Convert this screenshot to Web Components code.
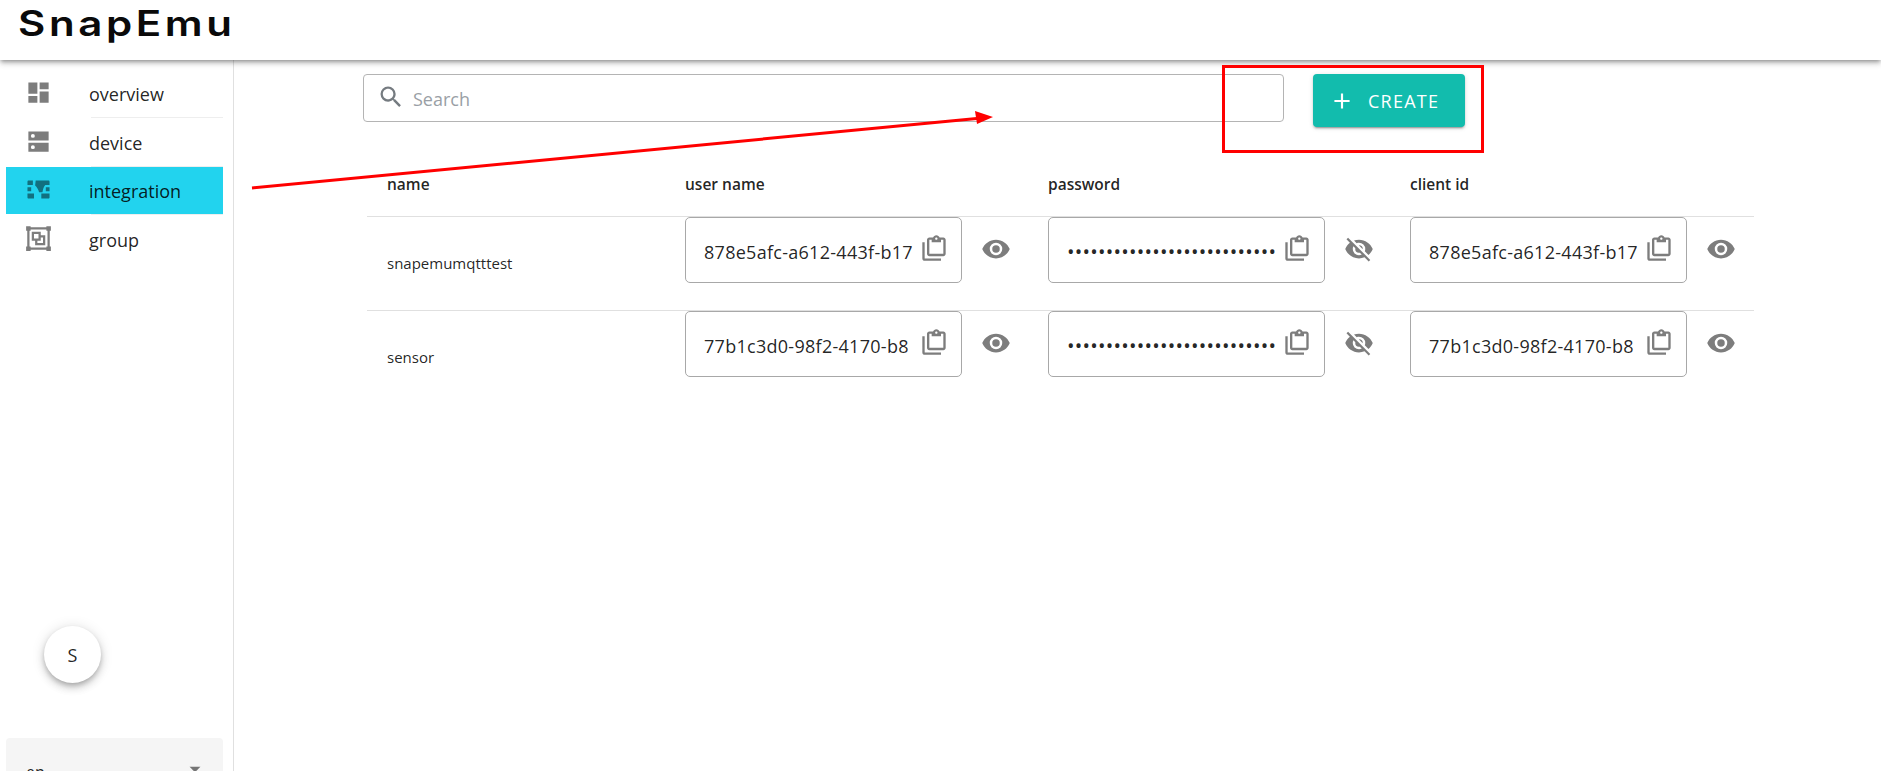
<!DOCTYPE html>
<html>
<head>
<meta charset="utf-8">
<style>
html, body { margin: 0; height: 100%; overflow: hidden; background: #fff; }
body { font-family: "Open Sans", "Noto Sans", sans-serif; color: rgba(0,0,0,.87); }
</style>
</head>
<body>
<app-shell></app-shell>

<script>
const ICONS = {
    dashboard: 'M13,3V9H21V3M13,21H21V11H13M3,21H11V15H3M3,13H11V3H3V13Z',
    device: 'M3 3h18v8H3zM3 13h18v8H3zM7 5.25a1.75 1.75 0 1 0 0 3.5a1.75 1.75 0 1 0 0-3.5zM7 15.25a1.75 1.75 0 1 0 0 3.5a1.75 1.75 0 1 0 0-3.5z',
    integration: 'M3.2 4H7V8H2.2V5C2.2 4.400 2.600 4 3.200 4zM2.200 10H5.500V13.500H2.200zM2.200 15.500H8V20H3.200C2.600 20 2.200 19.600 2.200 19zM9.500 4H20.800C21.400 4 21.800 4.400 21.800 5V8H18C16.500 9.500 16 12 15.500 14.500H12.500C12 12 10.500 10 9 8.500zM18.500 10H21.800V13.500H18.500zM14.500 15.500H21.800V19C21.800 19.600 21.400 20 20.800 20H14.500z',
    group: 'M1,1V5H2V19H1V23H5V22H19V23H23V19H22V5H23V1H19V2H5V1M5,4H19V5H20V19H19V20H5V19H4V5H5M6,6V14H9V18H18V9H14V6M8,8H12V12H8M14,11H16V16H11V14H14',
    magnify: 'M9.5,3A6.5,6.5 0 0,1 16,9.5C16,11.11 15.41,12.59 14.44,13.73L14.71,14H15.5L20.5,19L19,20.5L14,15.5V14.71L13.73,14.44C12.59,15.41 11.11,16 9.5,16A6.5,6.5 0 0,1 3,9.5A6.5,6.5 0 0,1 9.5,3M9.5,5C7,5 5,7 5,9.5C5,12 7,14 9.5,14C12,14 14,12 14,9.5C14,7 12,5 9.5,5Z',
    plus: 'M19,13H13V19H11V13H5V11H11V5H13V11H19V13Z',
    clipboard: 'M4 7V21H18V23H4C2.9 23 2 22.1 2 21V7H4M20 3C21.1 3 22 3.9 22 5V17C22 18.1 21.1 19 20 19H8C6.9 19 6 18.1 6 17V5C6 3.9 6.9 3 8 3H11.18C11.6 1.84 12.7 1 14 1C15.3 1 16.4 1.84 16.82 3H20M14 3C13.45 3 13 3.45 13 4C13 4.55 13.45 5 14 5C14.55 5 15 4.55 15 4C15 3.45 14.55 3 14 3M10 7V5H8V17H20V5H18V7H10Z',
    eye: 'M12,9A3,3 0 0,0 9,12A3,3 0 0,0 12,15A3,3 0 0,0 15,12A3,3 0 0,0 12,9M12,17A5,5 0 0,1 7,12A5,5 0 0,1 12,7A5,5 0 0,1 17,12A5,5 0 0,1 12,17M12,4.5C7,4.5 2.73,7.61 1,12C2.73,16.39 7,19.5 12,19.5C17,19.5 21.27,16.39 23,12C21.27,7.61 17,4.5 12,4.5Z',
    eyeoff: 'M11.83,9L15,12.16C15,12.11 15,12.05 15,12A3,3 0 0,0 12,9C11.94,9 11.89,9 11.83,9M7.53,9.8L9.08,11.35C9.03,11.56 9,11.77 9,12A3,3 0 0,0 12,15C12.22,15 12.44,14.97 12.65,14.92L14.2,16.47C13.53,16.8 12.79,17 12,17A5,5 0 0,1 7,12C7,11.21 7.2,10.47 7.53,9.8M2,4.27L4.28,6.55L4.73,7C3.08,8.3 1.78,10 1,12C2.73,16.39 7,19.5 12,19.5C13.55,19.5 15.03,19.2 16.38,18.66L16.81,19.08L19.73,22L21,20.73L3.27,3M12,7A5,5 0 0,1 17,12C17,12.64 16.87,13.26 16.64,13.82L19.57,16.75C21.07,15.5 22.27,13.86 23,12C21.27,7.61 17,4.5 12,4.5C10.6,4.5 9.26,4.75 8,5.2L10.17,7.35C10.74,7.13 11.35,7 12,7Z',
    menudown: 'M7,10L12,15L17,10H7Z'
};

class MdiIcon extends HTMLElement {
    connectedCallback(){
        const size = this.getAttribute('size') || 24;
        this.attachShadow({mode: 'open'}).innerHTML = `
        <style>
        :host { display: inline-flex; flex: none; width: ${size}px; height: ${size}px; color: inherit; }
        svg { width: 100%; height: 100%; display: block; fill: currentColor; fill-rule: evenodd; }
        </style>
        <svg viewBox="0 0 24 24"><path d="${ICONS[this.getAttribute('name')]}"/></svg>`;
    }
}
customElements.define('mdi-icon', MdiIcon);

class TopBar extends HTMLElement {
    connectedCallback(){
        this.attachShadow({mode: 'open'}).innerHTML = `
        <style>
        :host { display: flex; align-items: center; height: 60px; flex: none; position: relative; z-index: 2;
            background: #fff; box-shadow: 0 2px 4px -1px rgba(0,0,0,.35), 0 4px 5px 0 rgba(0,0,0,.12), 0 1px 10px 0 rgba(0,0,0,.1); }
        .logo { margin: -14px 0 0 18px; font: 600 35px/40px Inter, sans-serif; color: #0a0a0a;
            letter-spacing: 3px; transform: scaleX(1.2); transform-origin: left center; }
        </style>
        <div class="logo">SnapEmu</div>`;
    }
}
customElements.define('top-bar', TopBar);

class NavItem extends HTMLElement {
    connectedCallback(){
        const active = this.hasAttribute('active');
        this.attachShadow({mode: 'open'}).innerHTML = `
        <style>
        :host { display: flex; align-items: center; height: 47px; background: ${active ? '#22d3ee' : 'transparent'};
            color: rgba(0,0,0,.87); font-size: 18px; }
        .ic { width: 83px; padding-left: 18.5px; box-sizing: border-box; display: flex; margin-top: -2px;
            color: ${active ? '#12707f' : '#7d7d7d'}; }
        .lb { flex: 1; }
        </style>
        <div class="ic"><mdi-icon name="${this.getAttribute('icon')}" size="27"></mdi-icon></div>
        <div class="lb"><slot></slot></div>`;
    }
}
customElements.define('nav-item', NavItem);

class SideBar extends HTMLElement {
    connectedCallback(){
        this.attachShadow({mode: 'open'}).innerHTML = `
        <style>
        :host { display: flex; flex-direction: column; width: 234px; box-sizing: border-box; flex: none;
            border-right: 1px solid #e0e0e0; padding: 10px 10px 0 6px; height: 711px; overflow: hidden; }
        .divider { height: 1px; background: #eee; margin-left: 85px; flex: none; }
        nav-item { flex: none; }
        .avatar { width: 57px; height: 57px; border-radius: 50%; margin: auto 0 0 38px; background: #fff; flex: none;
            display: flex; align-items: center; justify-content: center; font-size: 18px;
            box-shadow: 0 3px 5px -1px rgba(0,0,0,.2), 0 5px 8px 0 rgba(0,0,0,.14), 0 1px 14px 0 rgba(0,0,0,.12); }
        .lang { flex: none; height: 56px; margin-top: 55px; margin-bottom: -23px; background: #f5f5f5; border-radius: 4px 4px 0 0;
            display: flex; align-items: flex-start; justify-content: space-between; padding: 22px 15px 0 20px; font-size: 16px; box-sizing: border-box; }
        .lang span { line-height: 24px; }
        .lang mdi-icon { color: #757575; margin-top: -4px; }
        </style>
        <nav-item icon="dashboard">overview</nav-item>
        <div class="divider"></div>
        <nav-item icon="device" style="padding-top:1px">device</nav-item>
        <div class="divider"></div>
        <nav-item icon="integration" active>integration</nav-item>
        <div class="divider"></div>
        <nav-item icon="group" style="padding-top:1px">group</nav-item>
        <div class="avatar">S</div>
        <div class="lang"><span>en</span><mdi-icon name="menudown" size="26"></mdi-icon></div>`;
    }
}
customElements.define('side-bar', SideBar);

class SearchBox extends HTMLElement {
    connectedCallback(){
        this.attachShadow({mode: 'open'}).innerHTML = `
        <style>
        :host { display: flex; align-items: center; width: 921px; height: 48px; box-sizing: border-box;
            border: 1px solid #b4b4b4; border-radius: 4px; padding: 0 0 0 13px; gap: 8px; color: #9a9fa6; font-size: 18px; }
        mdi-icon { color: #757b80; margin-top: -2px; }
        span { padding-top: 1px; }
        </style>
        <mdi-icon name="magnify" size="28"></mdi-icon><span><slot></slot></span>`;
    }
}
customElements.define('search-box', SearchBox);

class CreateButton extends HTMLElement {
    connectedCallback(){
        this.attachShadow({mode: 'open'}).innerHTML = `
        <style>
        :host { display: flex; align-items: center; width: 152px; height: 53px; box-sizing: border-box; padding-left: 16px;
            background: #12bcad; color: #fff; border-radius: 4px; font-size: 18px; letter-spacing: 1.25px; flex: none;
            box-shadow: 0 3px 1px -2px rgba(0,0,0,.2), 0 2px 2px 0 rgba(0,0,0,.14), 0 1px 5px 0 rgba(0,0,0,.12); }
        span { margin-left: 13px; }
        </style>
        <mdi-icon name="plus" size="26"></mdi-icon><span><slot></slot></span>`;
    }
}
customElements.define('create-button', CreateButton);

class SecretField extends HTMLElement {
    connectedCallback(){
        const hidden = this.hasAttribute('hidden-value');
        this.attachShadow({mode: 'open'}).innerHTML = `
        <style>
        :host { display: flex; align-items: flex-start; gap: 17px; }
        .box { display: flex; align-items: center; width: 277px; height: 66px; box-sizing: border-box; flex: none;
            border: 1px solid #a8a8a8; border-radius: 5px; padding: 0 13px 0 18px; background: #fff; }
        .val { flex: 1; min-width: 0; overflow: hidden; white-space: nowrap; font-size: 18px; letter-spacing: .28px; padding-top: 3px; }
        .val.dots { font-size: 20px; letter-spacing: .23px; line-height: 24px; }
        .copy { color: #7d7d7d; margin: -5px 0 0 ${hidden ? 8 : 3}px; }
        .eye { color: #7d7d7d; margin: 17px 0 0 2px; }
        </style>
        <div class="box">
            <div class="val ${hidden ? 'dots' : ''}"><slot></slot></div>
            <mdi-icon class="copy" name="clipboard" size="28"></mdi-icon>
        </div>
        <mdi-icon class="eye" name="${hidden ? 'eyeoff' : 'eye'}" size="30"></mdi-icon>`;
    }
}
customElements.define('secret-field', SecretField);

class MqttTable extends HTMLElement {
    connectedCallback(){
        const rows = [
            ['snapemumqtttest', '878e5afc-a612-443f-b17'],
            ['sensor', '77b1c3d0-98f2-4170-b8']
        ];
        const dots = '•'.repeat(40);
        this.attachShadow({mode: 'open'}).innerHTML = `
        <style>
        :host { display: block; width: 1387px; margin: 0 0 0 4px; font-size: 15px; }
        .row { display: grid; grid-template-columns: 318px 363px 362px 1fr; }
        .head { height: 88px; align-items: start; font-weight: 600; font-size: 15.5px; padding-top: 45px; box-sizing: border-box; }
        .head div:first-child, .name { padding-left: 20px; }
        .body { border-top: 1px solid #e0e0e0; height: 94px; box-sizing: border-box; }
        .name { align-self: center; font-size: 15px; padding-bottom: 2px; }
        </style>
        <div class="row head"><div>name</div><div>user name</div><div>password</div><div>client id</div></div>
        ${rows.map(r => `<div class="row body">
            <div class="name">${r[0]}</div>
            <secret-field>${r[1]}</secret-field>
            <secret-field hidden-value>${dots}</secret-field>
            <secret-field>${r[1]}</secret-field>
        </div>`).join('')}`;
    }
}
customElements.define('mqtt-table', MqttTable);

class AppShell extends HTMLElement {
    connectedCallback(){
        this.attachShadow({mode: 'open'}).innerHTML = `
        <style>
        :host { display: flex; flex-direction: column; height: 771px; overflow: hidden; position: relative; }
        .main { display: flex; flex: 1; min-height: 0; }
        .content { flex: 1; padding: 14px 0 0 129px; }
        .tools { display: flex; gap: 29px; align-items: flex-start; height: 54px; }
        .marks { position: absolute; left: 0; top: 0; pointer-events: none; z-index: 3; }
        </style>
        <top-bar></top-bar>
        <div class="main">
            <side-bar></side-bar>
            <div class="content">
                <div class="tools">
                    <search-box>Search</search-box>
                    <create-button>CREATE</create-button>
                </div>
                <mqtt-table></mqtt-table>
            </div>
        </div>
        <svg class="marks" width="1881" height="771">
            <rect x="1223.500" y="66.500" width="259" height="85" fill="none" stroke="#f00" stroke-width="3"/>
            <line x1="252" y1="188" x2="982" y2="118" stroke="#f00" stroke-width="3"/>
            <polygon points="993,117 975,111 977,124" fill="#f00"/>
        </svg>`;
    }
}
customElements.define('app-shell', AppShell);
</script>
</body>
</html>
